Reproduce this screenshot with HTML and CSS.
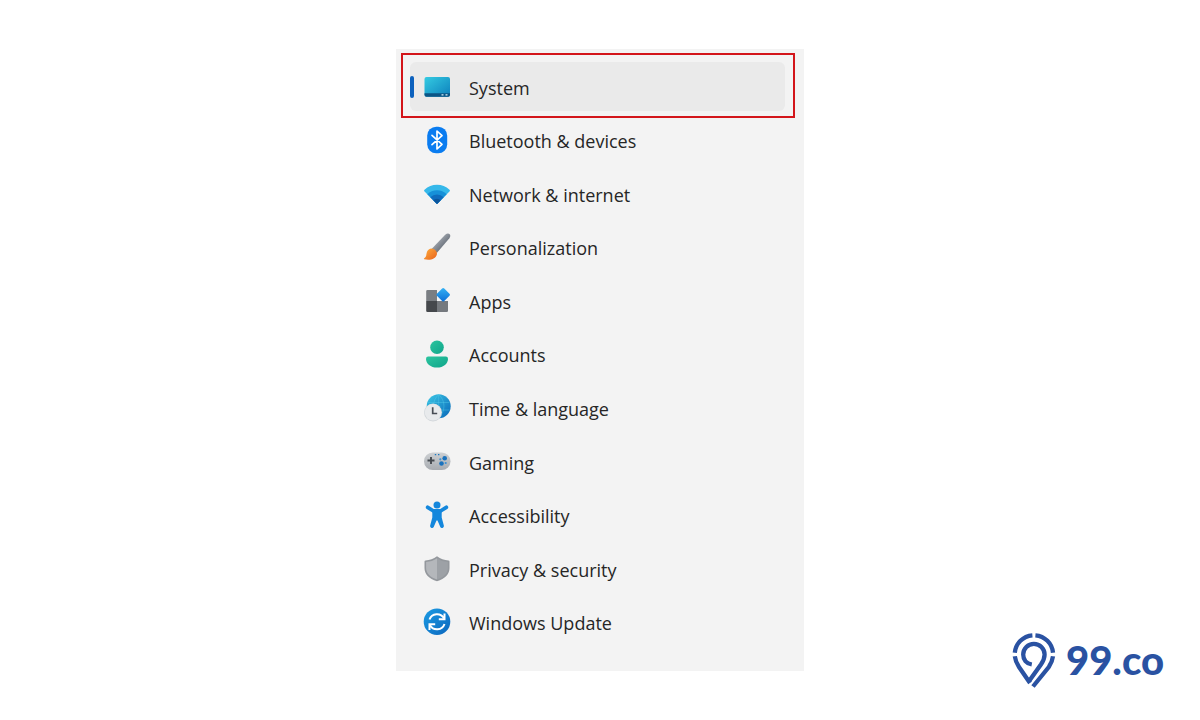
FILE: index.html
```html
<!DOCTYPE html>
<html lang="en">

<head>
  <meta charset="UTF-8">
  <meta name="viewport" content="width=device-width, initial-scale=1.0">
  <title>Settings</title>
  <link rel="stylesheet" href="styles.css">
</head>

<body>
  <nav class="settings-panel" aria-label="Settings">
    <ul class="settings-list">
      <li>
        <a class="settings-item active" href="#system" aria-current="page">
          <svg class="icon" viewBox="0 0 28 28" aria-hidden="true">
            <defs>
              <linearGradient id="screen" x1="0" y1="0" x2="1" y2="1">
                <stop offset="0" stop-color="#35cbe2" />
                <stop offset="1" stop-color="#0c80bc" />
              </linearGradient>
            </defs>
            <rect x="1.5" y="4" width="25.5" height="19.700" rx="2" fill="url(#screen)" />
            <path d="M1.5 20.300H27V21.700a2 2 0 0 1-2 2H3.500a2 2 0 0 1-2-2z" fill="#0b5585" />
            <path d="M18.500 21.800h2M22.500 21.800h2" stroke="#d5f1fa" stroke-width="1.3" />
          </svg>
          <span class="label">System</span>
        </a>
      </li>
      <li>
        <a class="settings-item" href="#bluetooth">
          <svg class="icon" viewBox="0 0 28 28" aria-hidden="true">
            <rect x="4.200" y=".7" width="20" height="26.600" rx="9" fill="#0a7cf0" />
            <path d="M9 9.300l10 9-5 4.700V5l5 4.700-10 9" fill="none" stroke="#fff" stroke-width="1.700" stroke-linejoin="round" stroke-linecap="round" />
          </svg>
          <span class="label">Bluetooth &amp; devices</span>
        </a>
      </li>
      <li>
        <a class="settings-item" href="#network">
          <svg class="icon" viewBox="0 0 28 28" aria-hidden="true">
            <path d="M14 24L1.300 11.200Q.7 10.400 1.500 9.700a18.500 18.500 0 0 1 25 0q.8.700.2 1.500z" fill="#35b8ea" />
            <path d="M14 24L4.300 14.200a13.800 13.800 0 0 1 19.400 0z" fill="#1690d8" />
            <path d="M14 24L7.300 17.200a9.500 9.500 0 0 1 13.400 0z" fill="#0f6cbd" />
            <path d="M14 24l-3.700-3.800a5.300 5.300 0 0 1 7.400 0z" fill="#0b559c" />
          </svg>
          <span class="label">Network &amp; internet</span>
        </a>
      </li>
      <li>
        <a class="settings-item" href="#personalization">
          <svg class="icon" viewBox="0 0 28 28" aria-hidden="true">
            <defs>
              <linearGradient id="handle" x1="0" y1="0" x2="1" y2="1">
                <stop offset=".3" stop-color="#a2a8b0" />
                <stop offset=".7" stop-color="#656c76" />
              </linearGradient>
              <linearGradient id="bristle" x1="0" y1="0" x2="1" y2="1">
                <stop offset="0" stop-color="#ffae3d" />
                <stop offset="1" stop-color="#e8621c" />
              </linearGradient>
            </defs>
            <path d="M8.800 15.800L22.200 1.800Q24.800-.3 26.700 1.200 28 2.900 26.400 5.300L13.800 20z" fill="url(#handle)" />
            <path d="M8.500 15.500c3 .2 5.500 2.500 5.500 5.300-.6 4.800-6.500 7-12.700 5.500-.6-.2-.5-.8 0-1.100 2.600-1.500 1.700-3.500 2.700-6.400.8-2 2.500-3.300 4.500-3.300z" fill="url(#bristle)" />
          </svg>
          <span class="label">Personalization</span>
        </a>
      </li>
      <li>
        <a class="settings-item" href="#apps">
          <svg class="icon" viewBox="0 0 28 28" aria-hidden="true">
            <defs>
              <linearGradient id="tile" x1="0" y1="0" x2="1" y2="1">
                <stop offset="0" stop-color="#35b4f5" />
                <stop offset="1" stop-color="#0a6cd6" />
              </linearGradient>
            </defs>
            <path d="M4.500 3H14v11H3.200V4.300q0-1.300 1.300-1.300z" fill="#7a7e83" />
            <path d="M3.200 14H14v11H4.500q-1.300 0-1.300-1.300z" fill="#45484c" />
            <path d="M14 14h11v9.700q0 1.300-1.300 1.300H14z" fill="#75797e" />
            <rect x="15" y="2.500" width="10.400" height="10.400" rx="1.500" transform="rotate(45 20.200 7.700)" fill="url(#tile)" />
          </svg>
          <span class="label">Apps</span>
        </a>
      </li>
      <li>
        <a class="settings-item" href="#accounts">
          <svg class="icon" viewBox="0 0 28 28" aria-hidden="true">
            <defs>
              <linearGradient id="person" x1="0" y1="0" x2="1" y2="1">
                <stop offset="0" stop-color="#2cc59f" />
                <stop offset="1" stop-color="#0fa58a" />
              </linearGradient>
            </defs>
            <circle cx="14" cy="7.200" r="6.800" fill="url(#person)" />
            <path d="M5.200 16.500h17.600q2.200 0 2.200 2.200c0 5-4.500 8.800-11 8.800S3 23.700 3 18.700q0-2.200 2.200-2.200z" fill="url(#person)" />
          </svg>
          <span class="label">Accounts</span>
        </a>
      </li>
      <li>
        <a class="settings-item" href="#time">
          <svg class="icon" viewBox="0 0 28 28" aria-hidden="true">
            <defs>
              <linearGradient id="globe" x1="0" y1="0" x2="1" y2="1">
                <stop offset="0" stop-color="#3cc8e6" />
                <stop offset="1" stop-color="#0867b8" />
              </linearGradient>
            </defs>
            <circle cx="15.700" cy="12.200" r="12" fill="url(#globe)" />
            <path d="M5 8.500h21.500M5 16h21.500M15.700.5v23.400M15.700.5c-7 6-7 17 0 23.400M15.700.5c7 6 7 17 0 23.400" fill="none" stroke="#54cdec" stroke-opacity=".4" />
            <circle cx="10" cy="18.500" r="9" fill="#d2d6da" />
            <circle cx="10" cy="18.300" r="8.300" fill="#e8eaec" />
            <path d="M9.700 13.300v6.200h4.500" fill="none" stroke="#484d55" stroke-width="1.700" />
          </svg>
          <span class="label">Time &amp; language</span>
        </a>
      </li>
      <li>
        <a class="settings-item" href="#gaming">
          <svg class="icon" viewBox="0 0 28 28" aria-hidden="true">
            <defs>
              <linearGradient id="pad" x1="0" y1="0" x2="0" y2="1">
                <stop offset="0" stop-color="#cdd0d3" />
                <stop offset="1" stop-color="#a8acb1" />
              </linearGradient>
            </defs>
            <rect x="1" y="4.500" width="26.500" height="17.500" rx="8.700" fill="url(#pad)" />
            <path d="M8 9v7M4.500 12.500h7" stroke="#454a50" stroke-width="1.900" />
            <path d="M11.800 6.700h1.400M15 6.700h1.400" stroke="#1c78c0" stroke-width="1.200" />
            <circle cx="21.700" cy="10.200" r="2.300" fill="#1a72bd" />
            <circle cx="18.500" cy="15.500" r="2.300" fill="#1a72bd" />
            <circle cx="17.300" cy="11.300" r="1.100" fill="#3b90d2" />
            <circle cx="22.700" cy="15" r="1.100" fill="#3b90d2" />
          </svg>
          <span class="label">Gaming</span>
        </a>
      </li>
      <li>
        <a class="settings-item" href="#accessibility">
          <svg class="icon" viewBox="0 0 28 28" aria-hidden="true">
            <circle cx="14" cy="4" r="3.500" fill="#1487dc" />
            <path d="M4.700 6.300L10.500 10h7L23.300 6.300" fill="none" stroke="#1487dc" stroke-width="3.800" stroke-linecap="round" stroke-linejoin="round" />
            <path d="M9.300 9h9.400v7.500l2.200 8.300a1.900 1.900 0 0 1-3.600 1.100L14.500 19.500h-1l-2.800 6.400a1.900 1.900 0 0 1-3.600-1.100l2.200-8.300z" fill="#1487dc" />
          </svg>
          <span class="label">Accessibility</span>
        </a>
      </li>
      <li>
        <a class="settings-item" href="#privacy">
          <svg class="icon" viewBox="0 0 28 28" aria-hidden="true">
            <path d="M14 1.200c3.500 2.700 7.300 4 11.500 4.200q1 0 1 1V13c0 6-4.300 10.800-12.500 13.300C5.800 23.800 1.500 19 1.500 13V6.400q0-1 1-1C6.700 5.200 10.500 3.900 14 1.200z" fill="#94989d" />
            <path d="M14 3.200c3.300 2.300 6.800 3.500 10.900 3.700V13c0 5-3.700 9.200-10.900 11.600z" fill="#9da1a6" />
            <path d="M14 3.200C10.700 5.500 7.200 6.700 3.100 6.900V13c0 5 3.700 9.200 10.900 11.600z" fill="#b4b7bb" />
          </svg>
          <span class="label">Privacy &amp; security</span>
        </a>
      </li>
      <li>
        <a class="settings-item" href="#update">
          <svg class="icon" viewBox="0 0 28 28" aria-hidden="true">
            <defs>
              <linearGradient id="update" x1="0" y1="0" x2="1" y2="1">
                <stop offset="0" stop-color="#1c9ce4" />
                <stop offset="1" stop-color="#0b66bd" />
              </linearGradient>
            </defs>
            <circle cx="14" cy="13.700" r="13.300" fill="url(#update)" />
            <path d="M6.500 11.500a8 8 0 0 1 14.500-1.300M21.500 16a8 8 0 0 1-14.500 1.300" fill="none" stroke="#fff" stroke-width="2" />
            <path d="M21.500 5.500v5.700h-5.700M6.500 22v-5.700h5.700" fill="none" stroke="#fff" stroke-width="2" />
          </svg>
          <span class="label">Windows Update</span>
        </a>
      </li>
    </ul>
  </nav>

  <a class="brand" href="#home">
    <svg class="brand-pin" viewBox="0 0 44 56" aria-hidden="true">
      <g fill="none" stroke="#2a52a2" stroke-width="4.300">
        <path d="M2.800 20.800a19.200 19.200 0 0 1 17.600-17.500M23.400 3.300a19.200 19.200 0 0 1 17.600 17.500" />
        <path d="M2.800 24.300c.5 4 1.700 7 4.200 10.700L18 51M41 24.300c-.5 4-1.700 7-4.200 10.700L21 54.500" />
        <path d="M19.800 32.500c-5.500-1-8.600-5-8.600-10a10.700 10.700 0 0 1 21.400 0c0 4-1.200 6.300-3.500 9.700L17.500 48.500" />
      </g>
    </svg>
    <span class="brand-name">99.co</span>
  </a>
</body>

</html>
```
FILE: styles.css
```css
* {
  box-sizing: border-box;
}

body {
  display: grid;
  grid-template-columns: 1fr minmax(auto, 408px) 1fr;
  min-height: 100vh;
  margin: 0;
  padding: 49px 0;
  background-color: #fff;
  font-family: "Open Sans", "Noto Sans", sans-serif;
}

.settings-panel {
  grid-column: 2;
  display: flex;
  padding: 13px 19px 24px 14px;
  background-color: #f3f3f3;
}

.settings-list {
  display: flex;
  flex-direction: column;
  justify-content: space-between;
  width: 100%;
  margin: 0;
  padding: 0;
  list-style: none;
}

.settings-item {
  position: relative;
  display: flex;
  align-items: center;
  gap: 18px;
  height: 49px;
  padding-left: 13px;
  border-radius: 6px;
  color: #262626;
  font-size: 18px;
  line-height: 24px;
  text-decoration: none;
}

.icon {
  flex: none;
  width: 28px;
  height: 28px;
}

.label {
  padding-top: 2px;
}

.active {
  background-color: #eaeaea;
}

/* blue marker at the left of the current page */
.active::before {
  content: "";
  position: absolute;
  left: 0;
  top: 14px;
  width: 4px;
  height: 22px;
  border-radius: 2px;
  background-color: #0c61bd;
}

/* red highlight around the current page */
.active::after {
  content: "";
  position: absolute;
  inset: -9px -10px -7px -9px;
  border: 2px solid #d3151a;
}

.brand {
  grid-column: 3;
  align-self: end;
  justify-self: end;
  display: flex;
  align-items: center;
  gap: 10px;
  margin: 0 36px -17px 0;
  color: #2a52a2;
  text-decoration: none;
}

.brand-pin {
  width: 44px;
  height: 56px;
}

.brand-name {
  font-family: Lato, sans-serif;
  font-size: 40px;
  font-weight: 900;
  line-height: 48px;
}
```
